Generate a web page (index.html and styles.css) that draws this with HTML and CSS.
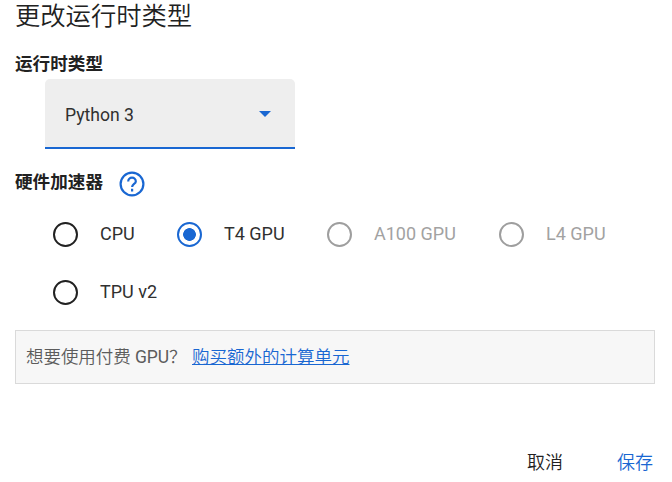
FILE: index.html
```html
<!DOCTYPE html>
<html lang="zh-CN">
<head>
<meta charset="utf-8">
<title>更改运行时类型</title>
<link rel="stylesheet" href="styles.css">
</head>
<body>
<main class="dialog">
<h1 class="title">更改运行时类型</h1>
<h2 class="label">运行时类型</h2>
<div class="select"><span>Python 3</span><svg class="arrow" width="12" height="6" viewBox="0 0 12 6"><path d="M0 0h12L6 6z"/></svg></div>
<div class="accel"><h2 class="label">硬件加速器</h2>
<svg class="help" width="26" height="26" viewBox="0 0 26 26"><circle cx="13" cy="13" r="11.4"/><path d="M9.2 10.4a3.8 3.8 0 0 1 7.6 0c0 2.5-3.7 2.7-3.7 5.6M13.1 17.8v2.6"/></svg></div>
<div class="options">
<label class="option cpu"><i class="radio"></i><span>CPU</span></label>
<label class="option t4"><i class="radio on"></i><span>T4 GPU</span></label>
<label class="option a100 off"><i class="radio"></i><span>A100 GPU</span></label>
<label class="option off"><i class="radio"></i><span>L4 GPU</span></label>
</div>
<div class="options second"><label class="option"><i class="radio"></i><span>TPU v2</span></label></div>
<div class="notice"><span>想要使用付费 <b>GPU</b>？</span><a href="#">购买额外的计算单元</a></div>
<div class="actions"><button>取消</button><button class="save">保存</button></div>
</main>
</body>
</html>
```
FILE: styles.css
```css
* { box-sizing: border-box; }
body { margin: 0; width: 672px; height: 482px; overflow: hidden; background: #fff; color: #303030; font: 18px/26px Roboto, "Noto Sans CJK SC", sans-serif; }
.dialog { display: flex; flex-direction: column; padding: 0 17px 0 15px; }
.title { margin: 0; color: #212121; font-size: 25.3px; font-weight: 350; line-height: 34px; }
.label { margin: 0; color: #212121; font-size: 17.6px; font-weight: 700; line-height: 26px; }
.title + .label { margin-top: 17px; }
.select { display: flex; align-items: center; justify-content: space-between; width: 250px; height: 70px; margin: 2px 0 0 30px; padding: 2px 24px 0 20px; background: #eee; border-bottom: 2px solid #1967d2; border-radius: 5px 5px 0 0; font-size: 17.6px; }
.select span { padding-top: 2px; }
.arrow { fill: #1967d2; }
.accel { display: flex; align-items: center; gap: 16px; height: 28px; margin-top: 21px; }
.accel .label { padding-bottom: 4px; }
.help { fill: none; stroke: #1967d2; stroke-width: 2.2; }
.options { display: flex; height: 26px; margin: 23px 0 0 38px; }
.option { display: flex; align-items: center; gap: 22px; white-space: nowrap; }
.cpu { width: 124px; }
.t4 { width: 150px; }
.a100 { width: 172px; }
.radio { width: 25px; height: 25px; border: 2px solid #212121; border-radius: 50%; }
.on { border-color: #1967d2; background: radial-gradient(circle, #1967d2 6px, transparent 6.7px); }
.off { color: #a2a2a2; }
.off .radio { border-color: #9e9e9e; }
.second { margin-top: 32px; }
.notice { display: flex; align-items: center; gap: 8px; height: 54px; margin-top: 25px; padding: 0 10px; color: #5c5c5c; background: #f7f7f7; border: 1px solid #dadada; font-size: 17.5px; font-weight: 350; }
.notice span { width: 158px; white-space: nowrap; letter-spacing: -.05px; }
.notice b { font-weight: 400; }
.notice a { color: #1967d2; }
.actions { display: flex; justify-content: flex-end; gap: 54px; margin-top: 66px; padding-right: 2px; }
button { padding: 0; border: 0; background: none; color: #212121; font: inherit; font-weight: 350; }
.save { color: #1967d2; }
```
